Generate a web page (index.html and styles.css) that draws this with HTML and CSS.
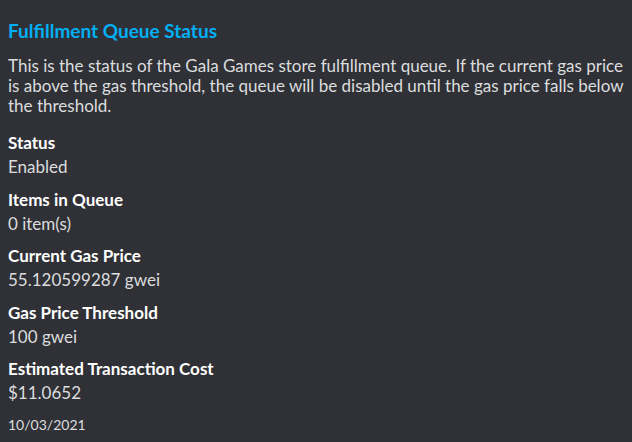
FILE: index.html
```html
<!DOCTYPE html>
<html lang="en">
<head>
    <meta charset="UTF-8">
    <meta name="viewport" content="width=device-width, initial-scale=1.0">
    <title>Fulfillment Queue Status</title>
    <link rel="stylesheet" href="styles.css">
</head>
<body>
    <div class="embed">
        <div class="embed-title">Fulfillment Queue Status</div>
        <div class="embed-description">This is the status of the Gala Games store fulfillment queue. If the current gas price is above the gas threshold, the queue will be disabled until the gas price falls below the threshold.</div>

        <div class="embed-fields">
            <div class="field">
                <div class="field-name">Status</div>
                <div class="field-value">Enabled</div>
            </div>
            <div class="field">
                <div class="field-name">Items in Queue</div>
                <div class="field-value">0 item(s)</div>
            </div>
            <div class="field">
                <div class="field-name">Current Gas Price</div>
                <div class="field-value">55.120599287 gwei</div>
            </div>
            <div class="field">
                <div class="field-name">Gas Price Threshold</div>
                <div class="field-value">100 gwei</div>
            </div>
            <div class="field">
                <div class="field-name">Estimated Transaction Cost</div>
                <div class="field-value">$11.0652</div>
            </div>
        </div>

        <div class="embed-footer">10/03/2021</div>
    </div>
</body>
</html>
```

FILE: styles.css
```css
/* General Styling */
body {
    margin: 0;
    background-color: #2f3136;
    color: #dcddde;
    font-family: Lato, "Open Sans", sans-serif;
}

.embed {
    padding: 20px 8px 0 8px;
}

.embed-title {
    font-size: 19px;
    font-weight: 700;
    line-height: 22px;
    color: #00aff4; /* Link blue */
}

.embed-description {
    margin-top: 14px;
    font-size: 17px;
    line-height: 20px;
}

/* Fields */
.embed-fields {
    display: flex;
    flex-direction: column;
    gap: 8.5px;
    margin-top: 15px;
}

.field-name {
    font-size: 17px;
    font-weight: 700;
    line-height: 24px;
    color: #ffffff;
}

.field-value {
    font-size: 17px;
    line-height: 24px;
}

.embed-footer {
    margin-top: 12px;
    font-size: 14px;
    line-height: 16px;
}
```
